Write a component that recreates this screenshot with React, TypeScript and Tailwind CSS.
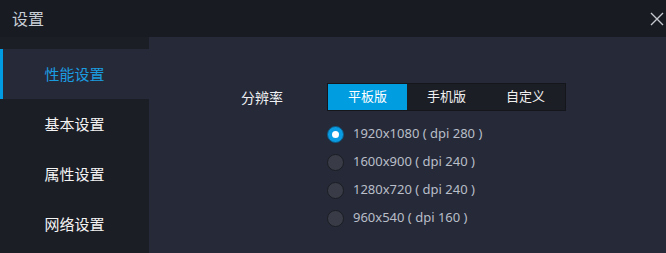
import React, { useState } from "react";

const font = { fontFamily: '"Noto Sans", "Noto Sans CJK SC", sans-serif' };

export default function App() {
  const [active, setActive] = useState(0);
  const [seg, setSeg] = useState(0);
  const [res, setRes] = useState(0);
  const nav = ["性能设置", "基本设置", "属性设置", "网络设置"];
  const segs = ["平板版", "手机版", "自定义"];
  const resolutions = [
    "1920x1080 ( dpi 280 )",
    "1600x900 ( dpi 240 )",
    "1280x720 ( dpi 240 )",
    "960x540 ( dpi 160 )",
  ];
  return (
    <div
      className="w-[666px] h-[253px] flex flex-col bg-[#181b22] overflow-hidden"
      style={font}
    >
      <div className="h-[37px] flex items-center justify-between pl-[12px] pr-[2px] shrink-0">
        <span className="text-[16px] leading-none text-[#c9ced6]">设置</span>
        <svg width="14" height="14" viewBox="0 0 14 14">
          <path d="M1 1 L13 13 M13 1 L1 13" stroke="#c4c7cc" strokeWidth="1.4" />
        </svg>
      </div>
      <div className="flex flex-1 min-h-0">
        <div className="w-[149px] bg-[#1c1e26] pt-[12px] flex flex-col shrink-0">
          {nav.map((n, i) => (
            <div
              key={n}
              onClick={() => setActive(i)}
              className={
                "h-[50px] flex items-center justify-center text-[15px] relative cursor-pointer " +
                (i === active ? "bg-[#262a38] text-[#1b9ce0]" : "text-[#f4f4f4]")
              }
            >
              {i === active && (
                <div className="absolute left-0 top-0 bottom-0 w-[3px] bg-[#009be2]" />
              )}
              {n}
            </div>
          ))}
        </div>
        <div className="flex-1 bg-[#262a38] pl-[92px] pt-[46px]">
          <div className="flex items-center">
            <div className="w-[86px] text-[14px] text-[#eef0f3]">分辨率</div>
            <div className="flex h-[28px] border border-[#14161b] bg-[#1c1e26]">
              {segs.map((s, i) => (
                <div
                  key={s}
                  onClick={() => setSeg(i)}
                  className={
                    "w-[79px] flex items-center justify-center text-[13px] cursor-pointer " +
                    (i === seg ? "bg-[#009de1] text-white" : "text-[#f0f0f0]")
                  }
                >
                  {s}
                </div>
              ))}
            </div>
          </div>
          <div className="ml-[86px] mt-[9px] flex flex-col">
            {resolutions.map((r, i) => (
              <div
                key={r}
                onClick={() => setRes(i)}
                className="h-[28px] flex items-center cursor-pointer"
              >
                {i === res ? (
                  <div className="w-[17px] h-[17px] rounded-full bg-[#0a9ce3] border border-[#0b5b87] flex items-center justify-center">
                    <div className="w-[7px] h-[7px] rounded-full bg-white" />
                  </div>
                ) : (
                  <div className="w-[17px] h-[17px] rounded-full bg-[#393c47] border border-[#1b1d23]" />
                )}
                <span className="ml-[9px] text-[13px] text-[#b9bec8]">{r}</span>
              </div>
            ))}
          </div>
        </div>
      </div>
    </div>
  );
}
